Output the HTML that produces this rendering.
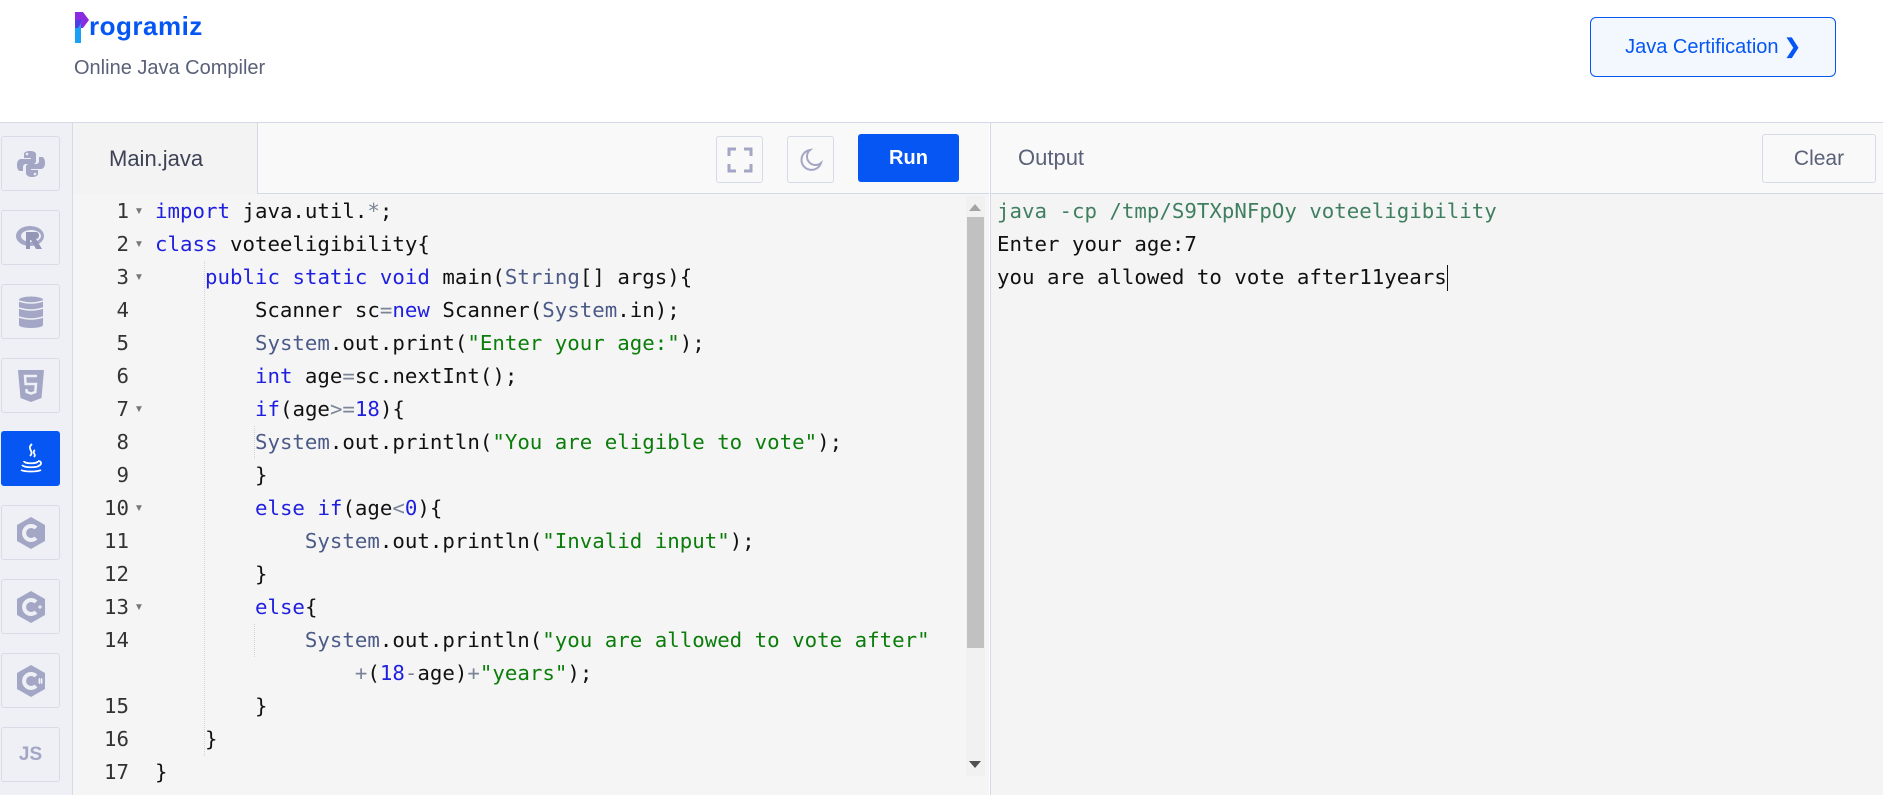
<!DOCTYPE html>
<html><head><meta charset="utf-8"><style>
*{margin:0;padding:0;box-sizing:border-box}
body{width:1883px;height:795px;overflow:hidden;background:#fff;font-family:"Liberation Sans",sans-serif;position:relative}
.abs{position:absolute}
.hdr{left:0;top:0;width:1883px;height:123px;border-bottom:1px solid #d3dae6;background:#fff}
.sub{left:74px;top:57px;font-size:20px;color:#5a6178}
.cert{left:1590px;top:17px;width:246px;height:60px;border:1px solid #0556f3;border-radius:6px;background:#f3f7fe;color:#0556f3;font-size:20px;text-align:center;line-height:58px}
.side{left:0;top:123px;width:73px;height:672px;background:#eef0f5;border-right:1px solid #d6dbe7}
.sb{position:absolute;left:1px;width:59px;height:55px;border:1px solid #d8dce7;border-radius:3px;background:#eef0f5;display:flex;align-items:center;justify-content:center}
.sb.act{background:#0556f3;border-color:#0556f3}
.bar{left:73px;top:123px;width:916px;height:71px;background:#f9f9f9;border-bottom:1px solid #d3dae6}
.tab{left:73px;top:123px;width:185px;height:71px;background:#f3f3f3;border-right:1px solid #d3dae6;font-size:22px;color:#3d4255;padding:23px 0 0 36px}
.ib{width:47px;height:47px;border:1px solid #d6dbe7;border-radius:3px;background:#f9f9f9;display:flex;align-items:center;justify-content:center}
.run{left:858px;top:134px;width:101px;height:48px;background:#0556f3;border-radius:3px;color:#fff;font-weight:bold;font-size:20px;text-align:center;line-height:48px}
.obar{left:990px;top:123px;width:893px;height:71px;background:#f9f9f9;border-bottom:1px solid #d3dae6;border-left:1px solid #d3dae6}
.clear{left:1762px;top:134px;width:114px;height:49px;border:1px solid #d6dbe7;border-radius:3px;background:#f9f9f9;color:#5a6178;font-size:21px;text-align:center;line-height:47px}
.ed{left:73px;top:194px;width:916px;height:601px;background:#f5f5f5}
.out{left:990px;top:194px;width:893px;height:601px;background:#f4f4f4;border-left:1px solid #d3dae6}
.code{font-family:"DejaVu Sans Mono",monospace;font-size:20.75px;line-height:33px;white-space:pre}
.gut{left:73px;top:195px;width:56px;text-align:right;color:#333}
.arr{left:134px;top:195px;color:#777;font-size:10px;line-height:33px;white-space:pre}
.src{left:155px;top:195px;color:#111}
.k{color:#1f1fe0}.t{color:#4b5a87}.s{color:#0a7d0a}.n{color:#1f1fe0}.o{color:#7a8598}
.vs{left:966px;top:196px;width:19px;height:580px;background:#f1f1f1}
.thumb{left:967px;top:217px;width:17px;height:431px;background:#c1c1c1}
.guide{width:1px;border-left:1px dotted #d4d4d4}
</style></head><body>
<div class="abs hdr"></div>
<svg class="abs" style="left:74px;top:12px" width="16" height="32" viewBox="0 0 16 32"><path d="M1 0 L9 0 L15 8 L9 16 L4 16 L9 8 L1 8Z" fill="#8a2be2"/><rect x="1" y="12" width="6" height="19" fill="#1aa0f5"/><path d="M1 8 L9 8 L4 16 L1 16Z" fill="#4c3fe6"/></svg>
<div class="abs" style="left:89px;top:11px;font-size:26px;font-weight:bold;color:#0556f3;letter-spacing:0.5px">rogramiz</div>
<div class="abs sub">Online Java Compiler</div>
<div class="abs cert">Java Certification <span style="font-weight:bold">❯</span></div>

<div class="abs side">
<div class="sb" style="top:13px"><svg width="30" height="30" viewBox="0 0 30 30"><path d="M14 2c-6 0-6 3-6 3v4h7v1H5s-4 0-4 6 3 6 3 6h3v-4s0-3 3-3h7s3 0 3-3V5s0-3-6-3z" fill="#a3a6c4"/><path d="M16 28c6 0 6-3 6-3v-4h-7v-1h10s4 0 4-6-3-6-3-6h-3v4s0 3-3 3h-7s-3 0-3 3v6s0 4 6 4z" fill="#a3a6c4"/><circle cx="11" cy="5" r="1.3" fill="#eef0f5"/><circle cx="19" cy="25" r="1.3" fill="#eef0f5"/></svg></div>
<div class="sb" style="top:87px"><svg width="32" height="28" viewBox="0 0 32 28"><ellipse cx="15" cy="12" rx="14" ry="10" fill="#a3a6c4"/><ellipse cx="16" cy="12" rx="10" ry="6" fill="#eef0f5"/><path d="M11 8h10c4 0 4 7 0 7l6 10h-6l-5-9h-1v9h-4z" fill="#9396b6"/></svg></div>
<div class="sb" style="top:161px"><svg width="26" height="32" viewBox="0 0 26 32"><ellipse cx="13" cy="4" rx="12" ry="3.5" fill="#a3a6c4"/><rect x="1" y="4" width="24" height="25" fill="#a3a6c4"/><ellipse cx="13" cy="29" rx="12" ry="3" fill="#a3a6c4"/><path d="M1 12q12 4 24 0M1 21q12 4 24 0M1 5q12 4 24 0" stroke="#eef0f5" stroke-width="1.5" fill="none"/></svg></div>
<div class="sb" style="top:235px"><svg width="28" height="32" viewBox="0 0 28 32"><path d="M1 0h26l-2.5 28L14 32 3.5 28z" fill="#a3a6c4"/><path d="M20 6H8l.6 8H19l-.7 8-4.3 1.5L9.7 22l-.3-3" stroke="#eef0f5" stroke-width="2.5" fill="none"/></svg></div>
<div class="sb act" style="top:308px"><svg width="28" height="34" viewBox="0 0 28 34"><path d="M15 2c-6 5 3 7-2 12M18 8c-4 3 2 4-1 7" stroke="#fff" stroke-width="1.8" fill="none"/><path d="M7 19c0 3 14 3 14 0M5 23c2 3 16 3 18 0M21 19c4 0 4 4 0 5M4 28c4 2 16 2 20 0" stroke="#fff" stroke-width="1.8" fill="none"/></svg></div>
<div class="sb" style="top:382px"><svg width="32" height="34" viewBox="0 0 32 34"><path d="M16 1l14 8v16l-14 8-14-8V9z" fill="#a3a6c4"/><path d="M21 12a7 7 0 1 0 0 10" stroke="#eef0f5" stroke-width="4" fill="none"/></svg></div>
<div class="sb" style="top:456px"><svg width="32" height="34" viewBox="0 0 32 34"><path d="M16 1l14 8v16l-14 8-14-8V9z" fill="#a3a6c4"/><path d="M21 12a7 7 0 1 0 0 10" stroke="#eef0f5" stroke-width="4" fill="none"/><path d="M23 17h4M25 15v4" stroke="#eef0f5" stroke-width="1.2"/></svg></div>
<div class="sb" style="top:530px"><svg width="32" height="34" viewBox="0 0 32 34"><path d="M16 1l14 8v16l-14 8-14-8V9z" fill="#a3a6c4"/><path d="M21 12a7 7 0 1 0 0 10" stroke="#eef0f5" stroke-width="4" fill="none"/><path d="M23 16h5M23 18h5M24.5 14v6M26.5 14v6" stroke="#eef0f5" stroke-width="1"/></svg></div>
<div class="sb" style="top:604px;font-weight:bold;color:#a3a6c4;font-size:19px">JS</div>
</div>

<div class="abs bar"></div>
<div class="abs tab">Main.java</div>
<div class="abs ib" style="left:716px;top:136px"><svg width="26" height="26" viewBox="0 0 26 26" fill="none" stroke="#a3a6c4" stroke-width="3"><path d="M2 9V2h7M17 2h7v7M24 17v7h-7M9 24H2v-7"/></svg></div>
<div class="abs ib" style="left:787px;top:136px"><svg width="26" height="26" viewBox="0 0 26 26"><path d="M12 3a10 10 0 1 0 11 13A8 8 0 0 1 12 3z" stroke="#a3a6c4" stroke-width="2" fill="none"/></svg></div>
<div class="abs run">Run</div>
<div class="abs obar"></div>
<div class="abs" style="left:1018px;top:145px;font-size:22px;color:#5a6178">Output</div>
<div class="abs clear">Clear</div>

<div class="abs ed"></div>
<div class="abs guide" style="left:204px;top:261px;height:495px"></div>
<div class="abs guide" style="left:254px;top:426px;height:33px"></div>
<div class="abs guide" style="left:254px;top:624px;height:33px"></div>
<div class="abs code gut">1
2
3
4
5
6
7
8
9
10
11
12
13
14

15
16
17</div>
<div class="abs arr">▼
▼
▼



▼


▼


▼</div>
<div class="abs code src"><span class="k">import</span> java.util.<span class="o">*</span>;
<span class="k">class</span> voteeligibility{
    <span class="k">public</span> <span class="k">static</span> <span class="k">void</span> main(<span class="t">String</span>[] args){
        Scanner sc<span class="o">=</span><span class="k">new</span> Scanner(<span class="t">System</span>.in);
        <span class="t">System</span>.out.print(<span class="s">"Enter your age:"</span>);
        <span class="k">int</span> age<span class="o">=</span>sc.nextInt();
        <span class="k">if</span>(age<span class="o">&gt;=</span><span class="n">18</span>){
        <span class="t">System</span>.out.println(<span class="s">"You are eligible to vote"</span>);
        }
        <span class="k">else</span> <span class="k">if</span>(age<span class="o">&lt;</span><span class="n">0</span>){
            <span class="t">System</span>.out.println(<span class="s">"Invalid input"</span>);
        }
        <span class="k">else</span>{
            <span class="t">System</span>.out.println(<span class="s">"you are allowed to vote after"</span>
                <span class="o">+</span>(<span class="n">18</span><span class="o">-</span>age)<span class="o">+</span><span class="s">"years"</span>);
        }
    }
}</div>
<div class="abs vs"></div>
<div class="abs" style="left:969px;top:204px;width:0;height:0;border-left:6px solid transparent;border-right:6px solid transparent;border-bottom:7px solid #a3a3a3"></div>
<div class="abs" style="left:969px;top:761px;width:0;height:0;border-left:6px solid transparent;border-right:6px solid transparent;border-top:7px solid #505050"></div>
<div class="abs thumb"></div>

<div class="abs out"></div>
<div class="abs code" style="left:997px;top:195px;color:#111"><span style="color:#3f7f5f">java -cp /tmp/S9TXpNFpOy voteeligibility</span>
Enter your age:7
you are allowed to vote after11years<span style="display:inline-block;width:1px;height:26px;background:#111;vertical-align:middle"></span></div>
</body></html>
